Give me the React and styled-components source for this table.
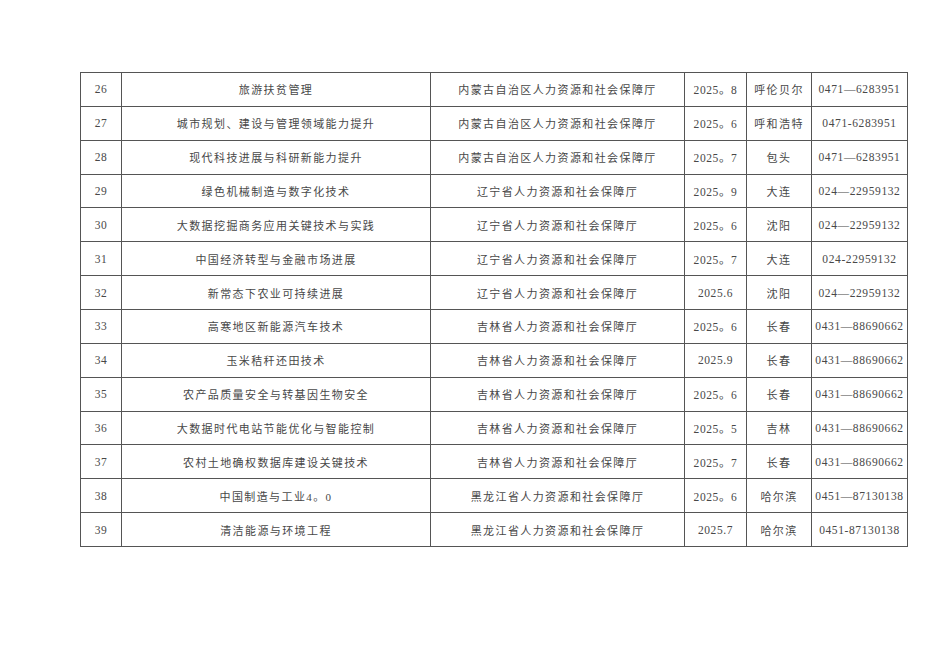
import React from "react";
import styled, { createGlobalStyle } from "styled-components";

const GlobalStyle = createGlobalStyle`
  html, body { margin: 0; padding: 0; background: #ffffff; }
  body { font-family: "Liberation Serif", "Noto Sans CJK SC", serif; }
`;

const Page = styled.div`
  width: 950px;
  height: 672px;
  padding: 72px 0 0 80px;
  box-sizing: border-box;
`;

const Table = styled.table`
  border-collapse: collapse;
  table-layout: fixed;
  width: 827px;
  border: 1px solid #4f4f4f;
`;

const Row = styled.tr`
  height: 33.86px;
`;

const Cell = styled.td`
  border: 1px solid #555555;
  padding: 0;
  text-align: center;
  vertical-align: middle;
  font-family: "Liberation Serif", "Noto Sans CJK SC", serif;
  font-size: ${(p) => (p.$num ? "11.5px" : "11px")};
  letter-spacing: ${(p) => (p.$num ? "0.6px" : "1.4px")};
  color: #484848;
  white-space: nowrap;
  overflow: hidden;
`;

const cols = [41, 309, 254, 62, 65, 96];

const NM = "内蒙古自治区人力资源和社会保障厅";
const LN = "辽宁省人力资源和社会保障厅";
const JL = "吉林省人力资源和社会保障厅";
const HL = "黑龙江省人力资源和社会保障厅";

const rows = [
  ["26", "旅游扶贫管理", NM, "2025。8", "呼伦贝尔", "0471—6283951"],
  ["27", "城市规划、建设与管理领域能力提升", NM, "2025。6", "呼和浩特", "0471-6283951"],
  ["28", "现代科技进展与科研新能力提升", NM, "2025。7", "包头", "0471—6283951"],
  ["29", "绿色机械制造与数字化技术", LN, "2025。9", "大连", "024—22959132"],
  ["30", "大数据挖掘商务应用关键技术与实践", LN, "2025。6", "沈阳", "024—22959132"],
  ["31", "中国经济转型与金融市场进展", LN, "2025。7", "大连", "024-22959132"],
  ["32", "新常态下农业可持续进展", LN, "2025.6", "沈阳", "024—22959132"],
  ["33", "高寒地区新能源汽车技术", JL, "2025。6", "长春", "0431—88690662"],
  ["34", "玉米秸秆还田技术", JL, "2025.9", "长春", "0431—88690662"],
  ["35", "农产品质量安全与转基因生物安全", JL, "2025。6", "长春", "0431—88690662"],
  ["36", "大数据时代电站节能优化与智能控制", JL, "2025。5", "吉林", "0431—88690662"],
  ["37", "农村土地确权数据库建设关键技术", JL, "2025。7", "长春", "0431—88690662"],
  ["38", "中国制造与工业4。0", HL, "2025。6", "哈尔滨", "0451—87130138"],
  ["39", "清洁能源与环境工程", HL, "2025.7", "哈尔滨", "0451-87130138"],
];

const numeric = [true, false, false, true, false, true];

export default function App() {
  return (
    <Page>
      <GlobalStyle />
      <Table>
        <colgroup>
          {cols.map((w, i) => (
            <col key={i} style={{ width: w }} />
          ))}
        </colgroup>
        <tbody>
          {rows.map((r) => (
            <Row key={r[0]}>
              {r.map((c, i) => (
                <Cell key={i} $num={numeric[i]}>
                  {c}
                </Cell>
              ))}
            </Row>
          ))}
        </tbody>
      </Table>
    </Page>
  );
}
